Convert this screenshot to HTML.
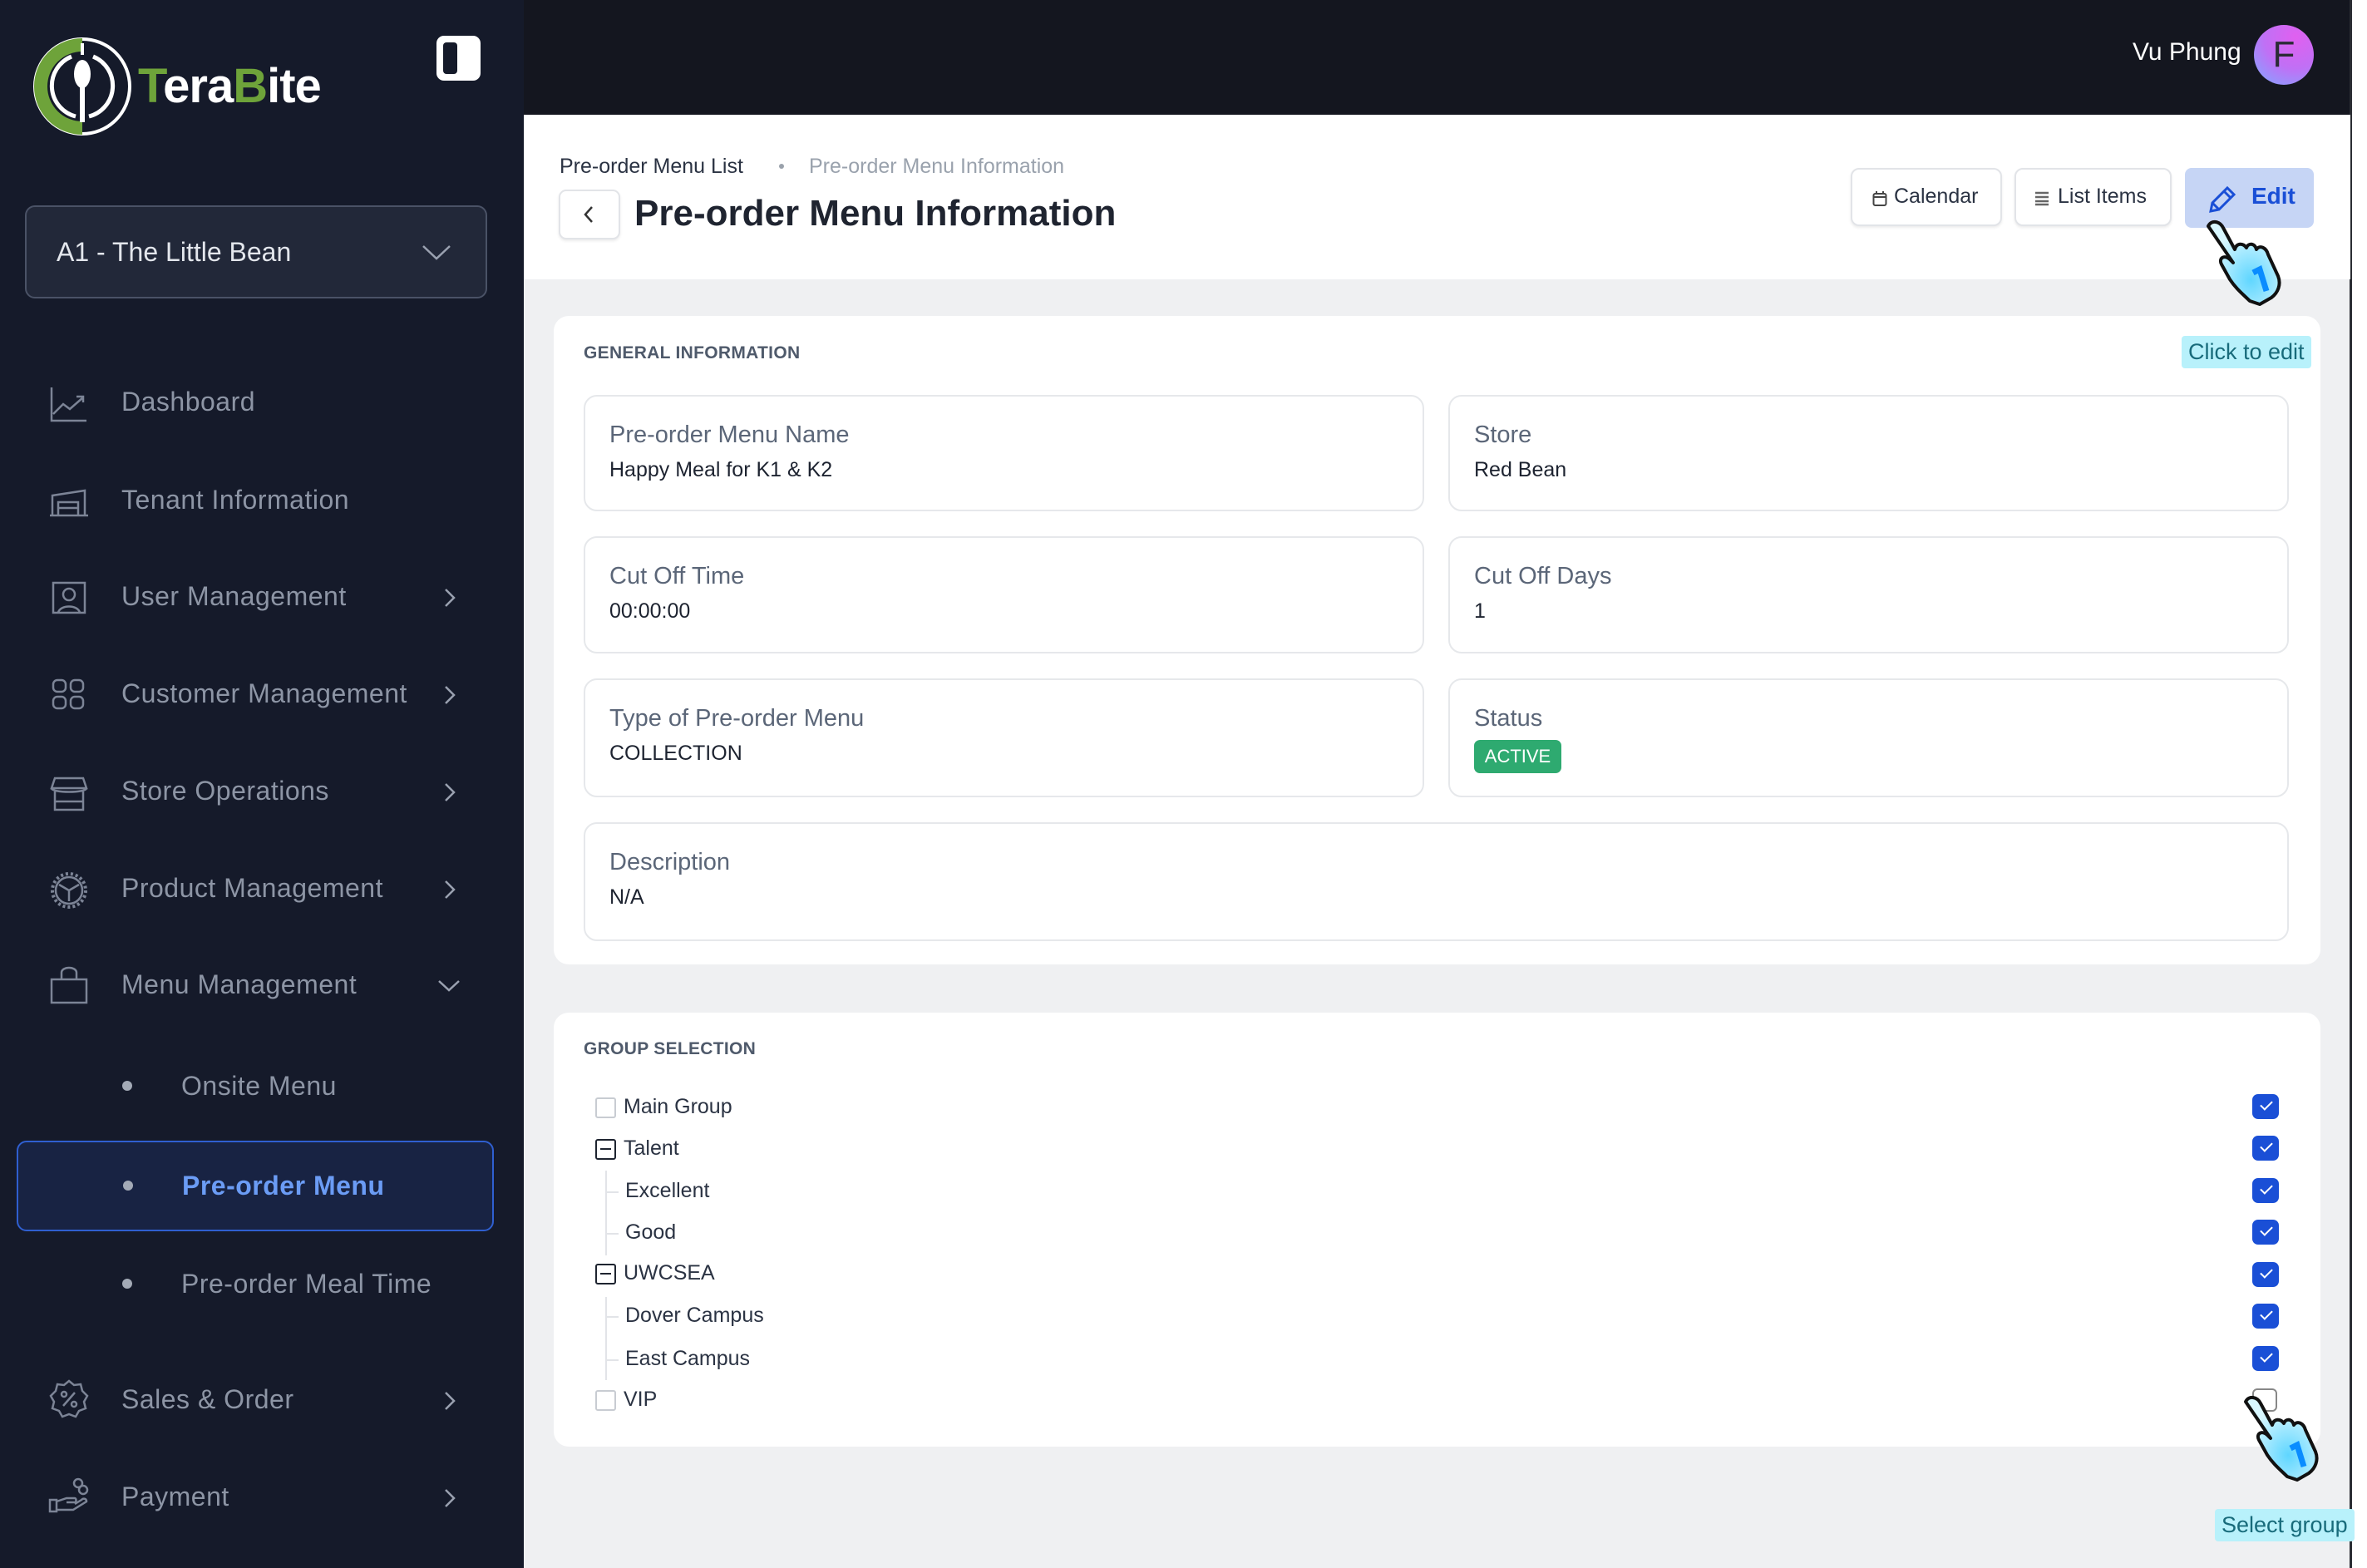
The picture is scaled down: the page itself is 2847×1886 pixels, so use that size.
<!DOCTYPE html>
<html><head><meta charset="utf-8"><style>
*{margin:0;padding:0;box-sizing:border-box}
body{width:2847px;height:1886px;position:relative;overflow:hidden;background:#eff0f2;font-family:"Liberation Sans",sans-serif}
.a{position:absolute}
#side{left:0;top:0;width:630px;height:1886px;background:#151a2a}
#top{left:630px;top:0;width:2197px;height:138px;background:#14161f}
#rline{left:2826px;top:0;width:3px;height:1886px;background:#2a2d33}
#rwhite{left:2829px;top:0;width:18px;height:1886px;background:#fff}
.mi{position:absolute;left:146px;font-size:32px;color:#8d95a5;letter-spacing:.5px}
.ic{position:absolute;left:58px;width:50px;height:50px}
.chev{position:absolute;left:528px;width:26px;height:26px}
.card{position:absolute;background:#fff;border-radius:18px}
.f{position:absolute;border:2px solid #e6e8eb;border-radius:16px;background:#fff}
.f .l{position:absolute;left:29px;top:30px;font-size:29px;color:#5b6678}
.f .v{position:absolute;left:29px;top:74px;font-size:25px;color:#1d2330}
.sec{position:absolute;font-size:21px;font-weight:bold;color:#4f5a6b;letter-spacing:.3px}
.tr{position:absolute;font-size:25px;color:#2b3343}
.cb{position:absolute;left:716px;width:25px;height:25px;border:2px solid #c8ccd2;border-radius:3px;background:#fff}
.cbm{position:absolute;left:716px;width:25px;height:25px;border:2.5px solid #1e2430;border-radius:3px}
.cbm:after{content:"";position:absolute;left:4px;right:4px;top:9px;height:2px;background:#1e2430}
.ck{position:absolute;left:2709px;width:32px;height:30px;border-radius:7px;background:#1a4fd6}
.ck:after{content:"";position:absolute;left:10px;top:8px;width:12px;height:6px;border-left:2.5px solid #fff;border-bottom:2.5px solid #fff;transform:rotate(-45deg)}
.btn{position:absolute;top:202px;height:70px;border:2px solid #e2e4e8;border-radius:10px;background:#fff;font-size:25px;color:#2b3343;box-shadow:0 2px 3px rgba(0,0,0,.08)}
.tag{position:absolute;background:#b8f1fb;color:#186b7b;font-size:27px;border-radius:4px;padding:4px 8px}
</style></head><body>
<div class="a" id="side"></div>
<div class="a" id="top"></div>
<div class="a" id="rline"></div>
<div class="a" id="rwhite"></div>

<svg class="a" style="left:36px;top:42px" width="130" height="124" viewBox="0 0 130 124">
<circle cx="63" cy="62" r="57" fill="none" stroke="#fff" stroke-width="4"/>
<path d="M63 12 A50 50 0 0 0 63 112" fill="none" stroke="#6ea33a" stroke-width="16"/>
<path d="M50 26 A38 38 0 0 0 55 98" fill="none" stroke="#fff" stroke-width="5"/>
<path d="M76 26 A38 38 0 0 1 71 98" fill="none" stroke="#fff" stroke-width="5"/>
<ellipse cx="63" cy="47" rx="10" ry="17" fill="#fff"/>
<rect x="60" y="60" width="6" height="45" fill="#fff"/>
<rect x="61" y="10" width="4" height="14" fill="#fff"/>
</svg>
<div class="a" style="left:166px;top:70px;font-size:58px;font-weight:bold;letter-spacing:-1px;color:#fff"><span style="color:#6ea33a">T</span>era<span style="color:#6ea33a">B</span>ite</div>
<div class="a" style="left:525px;top:43px;width:53px;height:54px;border-radius:9px;background:#fff"><div class="a" style="left:8px;top:8px;width:17px;height:38px;border-radius:4px;background:#151a2a"></div></div>

<div class="a" style="left:30px;top:247px;width:556px;height:112px;border:2px solid #4a5266;border-radius:12px;background:#222839"></div>
<div class="a" style="left:68px;top:285px;font-size:32px;color:#e3e6ec">A1 - The Little Bean</div>
<svg class="a" style="left:505px;top:290px" width="40" height="26"><path d="M4 6 L20 21 L36 6" stroke="#9aa1b0" stroke-width="2.5" fill="none"/></svg>

<svg class="ic" style="top:462px" viewBox="0 0 50 50" fill="none" stroke="#7c8496" stroke-width="2.5"><path d="M4 4V44H46M6 36L18 24L26 30L42 16M34 15H42V22"/></svg>
<div class="mi" style="top:465px">Dashboard</div>
<svg class="ic" style="top:578px" viewBox="0 0 50 50" fill="none" stroke="#7c8496" stroke-width="2.5"><path d="M2 42H48M5 42V18L44 12V42M12 42V26H36V42M12 33H36"/></svg>
<div class="mi" style="top:583px">Tenant Information</div>
<svg class="ic" style="top:695px" viewBox="0 0 50 50" fill="none" stroke="#7c8496" stroke-width="2.5"><rect x="6" y="6" width="38" height="36"/><circle cx="25" cy="20" r="7"/><path d="M12 42C14 32 36 32 38 42"/></svg>
<div class="mi" style="top:699px">User Management</div>
<svg class="ic" style="top:812px" viewBox="0 0 50 50" fill="none" stroke="#7c8496" stroke-width="2.5"><rect x="6" y="6" width="15" height="14" rx="5"/><rect x="27" y="6" width="15" height="14" rx="5"/><rect x="6" y="26" width="15" height="14" rx="5"/><rect x="27" y="26" width="15" height="14" rx="5"/></svg>
<div class="mi" style="top:816px">Customer Management</div>
<svg class="ic" style="top:930px" viewBox="0 0 50 50" fill="none" stroke="#7c8496" stroke-width="2.5"><path d="M8 6H42L46 18H4ZM4 18C4 24 46 24 46 18M8 22V44H42V22M8 34H42"/></svg>
<div class="mi" style="top:933px">Store Operations</div>
<svg class="ic" style="top:1046px" viewBox="0 0 50 50" fill="none" stroke="#7c8496" stroke-width="2.5"><circle cx="25" cy="25" r="16"/><circle cx="25" cy="25" r="20" stroke-dasharray="3 3" stroke-width="4"/><path d="M25 25L13 18M25 25L37 18M25 25V38"/></svg>
<div class="mi" style="top:1050px">Product Management</div>
<svg class="ic" style="top:1160px" viewBox="0 0 50 50" fill="none" stroke="#7c8496" stroke-width="2.5"><path d="M4 18H46V46H4ZM16 18V10C16 2 34 2 34 10V18"/></svg>
<div class="mi" style="top:1166px">Menu Management</div>
<svg class="a" style="left:525px;top:1176px" width="30" height="20"><path d="M3 4L15 15L27 4" stroke="#9aa1b0" stroke-width="2.5" fill="none"/></svg>

<div class="a" style="left:147px;top:1300px;width:12px;height:12px;border-radius:50%;background:#a3aab6"></div>
<div class="mi" style="left:218px;top:1288px">Onsite Menu</div>
<div class="a" style="left:20px;top:1372px;width:574px;height:109px;border:2px solid #2f5fd0;border-radius:12px;background:#182343"></div>
<div class="a" style="left:148px;top:1420px;width:12px;height:12px;border-radius:50%;background:#a3aab6"></div>
<div class="mi" style="left:219px;top:1408px;color:#6b9cf5;font-weight:bold">Pre-order Menu</div>
<div class="a" style="left:147px;top:1538px;width:12px;height:12px;border-radius:50%;background:#a3aab6"></div>
<div class="mi" style="left:218px;top:1526px">Pre-order Meal Time</div>

<svg class="ic" style="top:1658px" viewBox="0 0 50 50" fill="none" stroke="#7c8496" stroke-width="2.5"><path d="M25 3L31 8L39 7L41 15L47 21L43 28L45 36L37 39L33 46L25 43L17 46L13 39L5 36L7 28L3 21L9 15L11 7L19 8Z"/><circle cx="19" cy="19" r="3"/><circle cx="31" cy="31" r="3"/><path d="M32 17L18 33"/></svg>
<div class="mi" style="top:1665px">Sales &amp; Order</div>
<svg class="ic" style="top:1774px" viewBox="0 0 50 50" fill="none" stroke="#7c8496" stroke-width="2.5"><path d="M2 30H10V44H2ZM10 32L22 28H32C34 28 34 33 32 33H22M10 42L30 42L46 32C46 28 42 28 40 30L32 35"/><circle cx="36" cy="10" r="5"/><circle cx="42" cy="18" r="5"/></svg>
<div class="mi" style="top:1782px">Payment</div>

<svg class="chev" style="top:706px" viewBox="0 0 26 26"><path d="M8 3L18 13L8 23" stroke="#9aa1b0" stroke-width="2.5" fill="none"/></svg>
<svg class="chev" style="top:823px" viewBox="0 0 26 26"><path d="M8 3L18 13L8 23" stroke="#9aa1b0" stroke-width="2.5" fill="none"/></svg>
<svg class="chev" style="top:940px" viewBox="0 0 26 26"><path d="M8 3L18 13L8 23" stroke="#9aa1b0" stroke-width="2.5" fill="none"/></svg>
<svg class="chev" style="top:1057px" viewBox="0 0 26 26"><path d="M8 3L18 13L8 23" stroke="#9aa1b0" stroke-width="2.5" fill="none"/></svg>
<svg class="chev" style="top:1672px" viewBox="0 0 26 26"><path d="M8 3L18 13L8 23" stroke="#9aa1b0" stroke-width="2.5" fill="none"/></svg>
<svg class="chev" style="top:1789px" viewBox="0 0 26 26"><path d="M8 3L18 13L8 23" stroke="#9aa1b0" stroke-width="2.5" fill="none"/></svg>

<div class="a" style="left:2565px;top:46px;font-size:30px;color:#fff">Vu Phung</div>
<div class="a" style="left:2711px;top:30px;width:72px;height:72px;border-radius:50%;background:radial-gradient(circle at 70% 20%,#e060f0,#c070f5 50%,#8aa0ff 90%);font-size:44px;color:#2b2b35;text-align:center;line-height:72px">F</div>

<div class="a" style="left:630px;top:138px;width:2197px;height:198px;background:#fff"></div>
<div class="a" style="left:673px;top:186px;font-size:25px;color:#2b3343">Pre-order Menu List</div>
<div class="a" style="left:937px;top:197px;width:6px;height:6px;border-radius:50%;background:#9aa1ab"></div>
<div class="a" style="left:973px;top:186px;font-size:25px;color:#9aa2ad">Pre-order Menu Information</div>
<div class="a" style="left:672px;top:228px;width:74px;height:60px;border:2px solid #e2e4e8;border-radius:9px;background:#fff;box-shadow:0 2px 3px rgba(0,0,0,.08)"></div>
<svg class="a" style="left:698px;top:246px" width="20" height="24"><path d="M14 3L6 12L14 21" stroke="#333" stroke-width="2.5" fill="none"/></svg>
<div class="a" style="left:763px;top:232px;font-size:44px;font-weight:bold;color:#1f2430">Pre-order Menu Information</div>

<div class="btn" style="left:2226px;width:182px"><svg class="a" style="left:24px;top:25px" width="18" height="20"><rect x="1.5" y="4" width="15" height="14" rx="2" fill="none" stroke="#444" stroke-width="2"/><path d="M1.5 8H16.5M5 1V5M13 1V5" stroke="#444" stroke-width="2"/></svg><span class="a" style="left:50px;top:18px">Calendar</span></div>
<div class="btn" style="left:2423px;width:189px"><svg class="a" style="left:23px;top:26px" width="16" height="18"><path d="M0 2H16M0 7H16M0 12H16M0 16H16" stroke="#666" stroke-width="2.5"/></svg><span class="a" style="left:50px;top:18px">List Items</span></div>
<div class="a" style="left:2628px;top:202px;width:155px;height:72px;border-radius:8px;background:#c6d5f5"></div>
<svg class="a" style="left:2655px;top:222px" width="36" height="36" viewBox="0 0 36 36"><path d="M4 32L6 22L24 4L32 12L14 30Z M20 8L28 16 M6 22L14 30" stroke="#1a4fd6" stroke-width="3" fill="none"/></svg>
<div class="a" style="left:2708px;top:220px;font-size:28px;font-weight:bold;color:#1a4fd6">Edit</div>

<div class="card" style="left:666px;top:380px;width:2125px;height:780px"></div>
<div class="sec" style="left:702px;top:413px">GENERAL INFORMATION</div>
<div class="tag" style="left:2624px;top:404px">Click to edit</div>
<div class="f" style="left:702px;top:475px;width:1011px;height:140px"><div class="l">Pre-order Menu Name</div><div class="v">Happy Meal for K1 &amp; K2</div></div>
<div class="f" style="left:1742px;top:475px;width:1011px;height:140px"><div class="l">Store</div><div class="v">Red Bean</div></div>
<div class="f" style="left:702px;top:645px;width:1011px;height:141px"><div class="l">Cut Off Time</div><div class="v">00:00:00</div></div>
<div class="f" style="left:1742px;top:645px;width:1011px;height:141px"><div class="l">Cut Off Days</div><div class="v">1</div></div>
<div class="f" style="left:702px;top:816px;width:1011px;height:143px"><div class="l">Type of Pre-order Menu</div><div class="v">COLLECTION</div></div>
<div class="f" style="left:1742px;top:816px;width:1011px;height:143px"><div class="l">Status</div><div class="a" style="left:29px;top:72px;width:105px;height:40px;border-radius:7px;background:#2eaa70;color:#fff;font-size:22px;text-align:center;line-height:40px">ACTIVE</div></div>
<div class="f" style="left:702px;top:989px;width:2051px;height:143px"><div class="l">Description</div><div class="v">N/A</div></div>

<div class="card" style="left:666px;top:1218px;width:2125px;height:522px"></div>
<div class="sec" style="left:702px;top:1250px">GROUP SELECTION</div>
<div class="cb" style="top:1320px"></div><div class="tr" style="left:750px;top:1317px">Main Group</div>
<div class="cbm" style="top:1370px"></div><div class="tr" style="left:750px;top:1367px">Talent</div>
<div class="a" style="left:728px;top:1408px;width:2px;height:102px;background:#e2e4e8"></div>
<div class="a" style="left:730px;top:1433px;width:14px;height:2px;background:#e2e4e8"></div>
<div class="a" style="left:730px;top:1483px;width:14px;height:2px;background:#e2e4e8"></div>
<div class="tr" style="left:752px;top:1418px">Excellent</div>
<div class="tr" style="left:752px;top:1468px">Good</div>
<div class="cbm" style="top:1520px"></div><div class="tr" style="left:750px;top:1517px">UWCSEA</div>
<div class="a" style="left:728px;top:1560px;width:2px;height:100px;background:#e2e4e8"></div>
<div class="a" style="left:730px;top:1583px;width:14px;height:2px;background:#e2e4e8"></div>
<div class="a" style="left:730px;top:1635px;width:14px;height:2px;background:#e2e4e8"></div>
<div class="tr" style="left:752px;top:1568px">Dover Campus</div>
<div class="tr" style="left:752px;top:1620px">East Campus</div>
<div class="cb" style="top:1672px"></div><div class="tr" style="left:750px;top:1669px">VIP</div>

<div class="ck" style="top:1316px"></div><div class="ck" style="top:1366px"></div><div class="ck" style="top:1417px"></div><div class="ck" style="top:1467px"></div><div class="ck" style="top:1518px"></div><div class="ck" style="top:1568px"></div><div class="ck" style="top:1619px"></div>
<div class="a" style="left:2709px;top:1670px;width:30px;height:28px;border:2px solid #888;border-radius:6px;background:#fff"></div>
<div class="tag" style="left:2664px;top:1815px">Select group</div>

<svg class="a" style="left:2648px;top:262px" width="110" height="110" viewBox="0 0 110 110">
<defs><radialGradient id="g" cx=".6" cy=".7" r=".6"><stop offset="0" stop-color="#5fd6ff"/><stop offset="1" stop-color="#d8f7ff"/></radialGradient></defs>
<path d="M8 10C12 2 22 4 26 12L40 38C42 30 50 30 54 36C56 30 64 30 66 38C70 32 78 36 80 44L92 70C96 80 92 90 84 96L70 104L58 100C50 92 42 86 34 74L24 56C20 48 28 44 34 50L38 54Z" fill="url(#g)" stroke="#111" stroke-width="4" stroke-linejoin="round"/>
<path d="M62 66L70 62L78 88" stroke="#0a8cff" stroke-width="7" fill="none"/>
</svg>
<svg class="a" style="left:2693px;top:1676px" width="110" height="110" viewBox="0 0 110 110">
<path d="M8 10C12 2 22 4 26 12L40 38C42 30 50 30 54 36C56 30 64 30 66 38C70 32 78 36 80 44L92 70C96 80 92 90 84 96L70 104L58 100C50 92 42 86 34 74L24 56C20 48 28 44 34 50L38 54Z" fill="url(#g)" stroke="#111" stroke-width="4" stroke-linejoin="round"/>
<path d="M62 66L70 62L78 88" stroke="#0a8cff" stroke-width="7" fill="none"/>
</svg>
</body></html>
